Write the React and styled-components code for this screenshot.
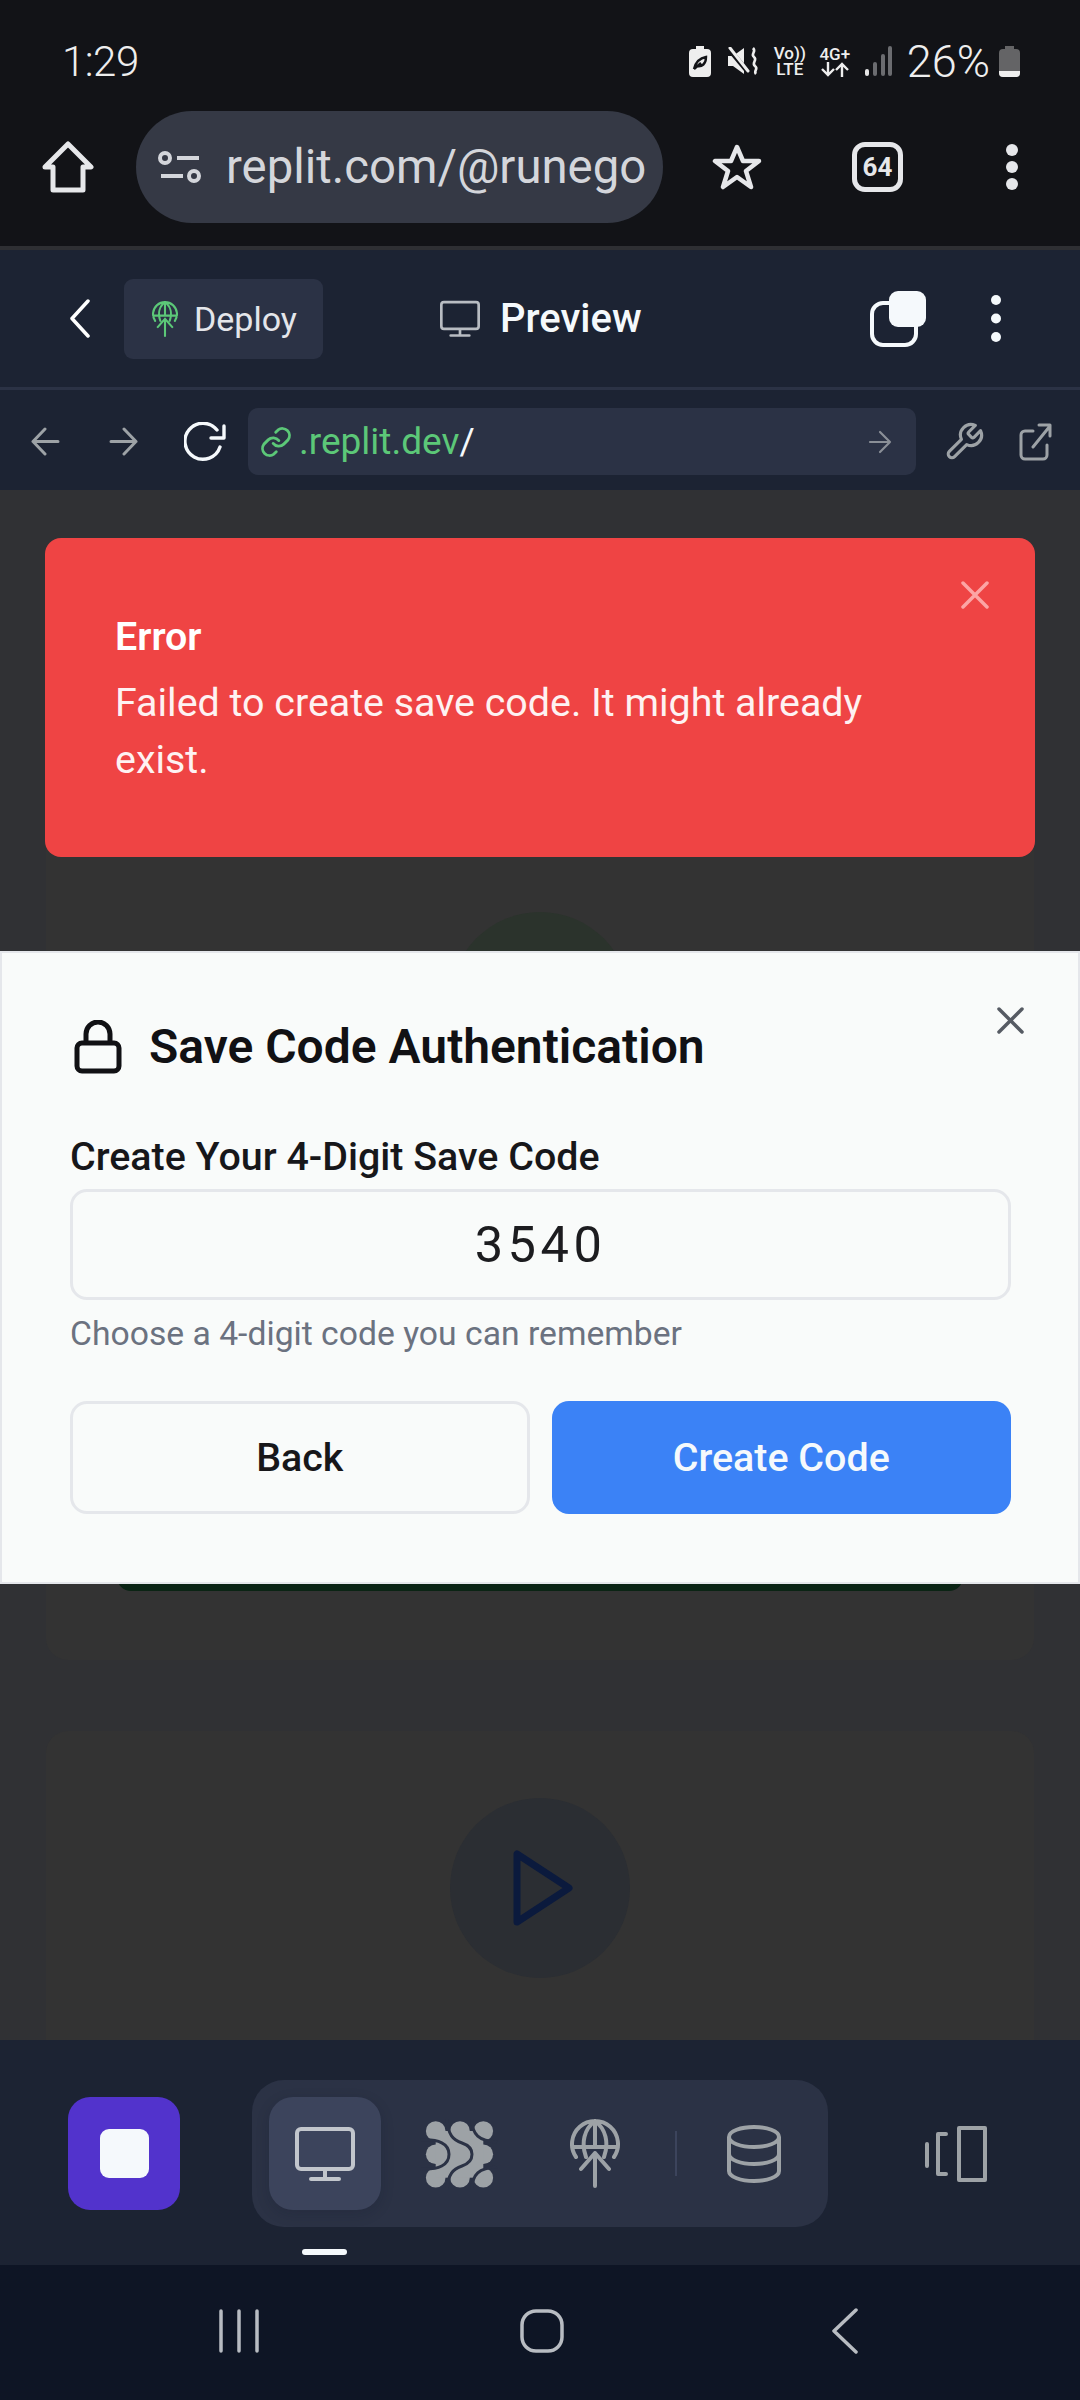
import React from 'react'
import styled, { createGlobalStyle } from 'styled-components'

const GlobalStyle = createGlobalStyle`
  html, body { margin: 0; padding: 0; background: #0e1525; }
  * { box-sizing: border-box; }
  body { font-family: Roboto, "Liberation Sans", sans-serif; }
`

const Screen = styled.div`
  width: 1080px;
  height: 2400px;
  display: flex;
  flex-direction: column;
  overflow: hidden;
`

const Icon = styled.span`
  display: flex;
  flex: none;
  margin-left: ${(p) => p.$ml || 0}px;
  margin-right: ${(p) => p.$mr || 0}px;
`

const StatusBar = styled.div`
  height: 110px;
  flex: none;
  background: #121317;
  color: #eeeeee;
  display: flex;
  align-items: center;
  padding: 12px 60px 0 62px;
`

const Clock = styled.span`
  font-size: 42px;
  font-weight: 350;
  letter-spacing: -0.5px;
`

const StatusIcons = styled.div`
  margin-left: auto;
  display: flex;
  align-items: center;
`

const TinyStack = styled.div`
  display: flex;
  flex-direction: column;
  align-items: center;
  width: ${(p) => p.$w}px;
  margin-right: ${(p) => p.$mr}px;
  font-size: 17px;
  font-weight: 500;
  line-height: 16px;
  color: #eeeeee;
`

const Percent = styled.span`
  font-size: 45px;
  font-weight: 300;
  margin: 0 9px 0 15px;
  line-height: 1;
`

const ChromeBar = styled.div`
  height: 136px;
  flex: none;
  background: #121317;
  display: flex;
  align-items: center;
  padding: 0 0 22px 42px;
`

const UrlPill = styled.div`
  width: 527px;
  height: 112px;
  margin: 0 49px 0 42px;
  border-radius: 56px;
  background: #353945;
  display: flex;
  align-items: center;
  padding-left: 22px;
`

const UrlText = styled.span`
  width: 419px;
  margin-left: 24px;
  overflow: hidden;
  white-space: nowrap;
  font-size: 47.3px;
  color: #d4d6db;
`

const TabCount = styled.div`
  width: 51px;
  height: 50px;
  margin: 0 103px 0 90px;
  border: 5px solid #e6e7ea;
  border-radius: 13px;
  display: flex;
  align-items: center;
  justify-content: center;
  color: #e6e7ea;
  font-size: 26px;
  font-weight: 700;
`

const Separator = styled.div`
  height: 4px;
  flex: none;
  background: #2e2f33;
`

const ReplitHeader = styled.div`
  height: 140px;
  flex: none;
  background: #1c2333;
  border-bottom: 3px solid #2b3245;
  display: flex;
  align-items: center;
  padding-left: 69px;
`

const DeployButton = styled.div`
  width: 199px;
  height: 80px;
  margin: 0 117px 0 34px;
  border-radius: 9px;
  background: #2b3245;
  display: flex;
  align-items: center;
  gap: 16px;
  padding-left: 28px;
  color: #e4e6ea;
  font-size: 34px;
`

const PreviewTitle = styled.div`
  display: flex;
  align-items: center;
  gap: 20px;
  color: #f5f9fc;
  font-size: 40px;
  font-weight: 500;
  margin-right: 228px;
`

const AddressRow = styled.div`
  height: 100px;
  flex: none;
  background: #1c2333;
  display: flex;
  align-items: center;
  padding: 3px 0 0 31px;
`

const AddressInput = styled.div`
  width: 668px;
  height: 67px;
  margin: 0 27px 0 22px;
  border-radius: 10px;
  background: #2b3245;
  display: flex;
  align-items: center;
  padding: 0 24px 0 11px;
  font-size: 37px;
`

const Domain = styled.span`
  color: #5cc878;
  margin-left: 6px;
`

const Slash = styled.span`
  color: #f5f9fc;
  flex: 1;
`

const Page = styled.div`
  position: relative;
  flex: 1;
  min-height: 0;
  overflow: hidden;
  background: #303134;
  padding: 300px 46px 0;
  display: flex;
  flex-direction: column;
  gap: 71px;
`

const Card = styled.div`
  flex: none;
  height: ${(p) => p.$h}px;
  background: #333333;
  border-radius: 22px;
  display: flex;
  flex-direction: column;
  align-items: center;
  padding-top: ${(p) => p.$top}px;
`

const Circle = styled.div`
  flex: none;
  width: 180px;
  height: 180px;
  border-radius: 50%;
  background: ${(p) => p.$color};
  display: flex;
  align-items: center;
  justify-content: center;
`

const HiddenBar = styled.div`
  width: 846px;
  height: 112px;
  margin-top: 387px;
  border-radius: 14px;
  background: #0a2414;
`

const Toast = styled.div`
  position: absolute;
  top: 48px;
  left: 45px;
  width: 990px;
  height: 319px;
  border-radius: 16px;
  background: #ef4444;
  padding: 71px 130px 0 70px;
  color: #fef2f2;
`

const ToastTitle = styled.div`
  font-size: 39.4px;
  font-weight: 600;
  line-height: 56px;
  color: #ffffff;
`

const ToastBody = styled.div`
  font-size: 39.4px;
  line-height: 56.5px;
  margin-top: 10px;
`

const ToastClose = styled.div`
  position: absolute;
  top: 43px;
  right: 46px;
  line-height: 0;
`

const Modal = styled.div`
  position: absolute;
  top: 461px;
  left: 0;
  width: 1080px;
  height: 633px;
  background: #f9fbfa;
  border: 2px solid #e5e7eb;
  padding: 64px 67px 0 68px;
`

const ModalClose = styled.div`
  position: absolute;
  top: 54px;
  right: 54px;
  line-height: 0;
`

const ModalHeading = styled.div`
  display: flex;
  align-items: center;
  gap: 27px;
  padding-left: 4px;
  font-size: 48px;
  font-weight: 600;
  line-height: 60px;
  color: #111114;
`

const FieldLabel = styled.div`
  margin-top: 51px;
  font-size: 39.4px;
  font-weight: 500;
  line-height: 57px;
  color: #17171a;
`

const CodeField = styled.div`
  margin-top: 4px;
  height: 111px;
  border: 3px solid #e5e7eb;
  border-radius: 17px;
  display: flex;
  align-items: center;
  justify-content: center;
  font-size: 50.6px;
  letter-spacing: 4.5px;
  color: #1c1c1f;
`

const Hint = styled.div`
  margin-top: 9px;
  font-size: 33.7px;
  line-height: 50px;
  color: #6b7280;
`

const Buttons = styled.div`
  margin-top: 42px;
  display: grid;
  grid-template-columns: 1fr 1fr;
  gap: 22px;
`

const ActionButton = styled.div`
  height: 113px;
  border-radius: 17px;
  border: ${(p) => (p.$primary ? '0' : '3px solid #e5e7eb')};
  background: ${(p) => (p.$primary ? '#3b82f6' : 'transparent')};
  color: ${(p) => (p.$primary ? '#f5f9fc' : '#17171a')};
  display: flex;
  align-items: center;
  justify-content: center;
  font-size: 39.4px;
  font-weight: 500;
`

const Footer = styled.div`
  height: 225px;
  flex: none;
  background: #1c2333;
  display: flex;
  align-items: flex-start;
  padding: 40px 0 0 68px;
`

const StopButton = styled.div`
  width: 112px;
  height: 113px;
  margin: 17px 72px 0 0;
  border-radius: 22px;
  background: #5233cc;
  display: flex;
  align-items: center;
  justify-content: center;
`

const StopSquare = styled.div`
  width: 49px;
  height: 49px;
  border-radius: 9px;
  background: #f5f9fc;
`

const TabGroup = styled.div`
  position: relative;
  width: 576px;
  height: 147px;
  border-radius: 32px;
  background: #2b3245;
  display: flex;
  align-items: center;
  padding-left: 17px;
`

const TabSlot = styled.div`
  flex: none;
  width: ${(p) => p.$w}px;
  height: 113px;
  border-radius: 24px;
  background: ${(p) => (p.$active ? '#3c445c' : 'transparent')};
  box-shadow: ${(p) => (p.$active ? '0 4px 14px rgba(14, 21, 37, 0.16)' : 'none')};
  display: flex;
  align-items: center;
  justify-content: center;
`

const TabDivider = styled.div`
  flex: none;
  width: 2px;
  height: 45px;
  background: #3c445c;
  margin: 0 24px;
`

const ActiveMark = styled.div`
  position: absolute;
  left: 50px;
  top: 169px;
  width: 45px;
  height: 6px;
  border-radius: 3px;
  background: #f5f9fc;
`

const DeviceIcon = styled.div`
  margin: 46px 0 0 97px;
  line-height: 0;
`

const NavBar = styled.div`
  height: 135px;
  flex: none;
  background: #0e1525;
  display: flex;
  align-items: center;
  padding: 0 0 4px 219px;
`

const Line = ({ d, w, h, box, color = '#fff', sw = 3 }) => (
  <svg width={w} height={h} viewBox={box} fill="none" stroke={color} strokeWidth={sw} strokeLinecap="round" strokeLinejoin="round">
    <path d={d} />
  </svg>
)

const MONITOR = 'M6 3h48a4 4 0 0 1 4 4v32a4 4 0 0 1-4 4H6a4 4 0 0 1-4-4V7a4 4 0 0 1 4-4ZM30 43v10M16 53h28'
const GLOBE = 'M5 36A23 23 0 1 1 43 36M24 0C13 8 10 22 15 36M24 0C35 8 38 22 33 36M1 26H47M24 0V26M10 48L24 32L38 48M24 32V65'
const DATABASE = 'M27 3c13 0 25 4 25 10s-12 10-25 10S2 19 2 13 14 3 27 3ZM2 13v34c0 6 12 10 25 10s25-4 25-10V13M2 30c0 6 12 10 25 10s25-4 25-10'

const ReplitBlob = () => (
  <svg width="90" height="90" viewBox="0 -2 90 90">
    <g fill="#9da2a6">
      <circle cx="20.7" cy="20" r="9.8" />
      <circle cx="45" cy="20" r="9.8" />
      <circle cx="68.3" cy="20" r="9.8" />
      <circle cx="20.7" cy="43.3" r="9.8" />
      <circle cx="68.3" cy="43.3" r="9.8" />
      <circle cx="20.7" cy="66.7" r="9.8" />
      <circle cx="45" cy="66.7" r="9.8" />
      <circle cx="68.3" cy="66.7" r="9.8" />
      <rect x="20.7" y="20" width="47.6" height="46.7" />
    </g>
    <g fill="none" stroke="#2b3245" strokeWidth="3">
      <path d="M6 29C24 28 34 33 34 43.3C34 54 24 59 6 58" />
      <path d="M32 8C33 24 38 29 47 32C53 34 57 38 57 43.3C57 49 53 53 47 55C38 58 33 63 32 79" />
      <path d="M57 8C57 24 64 30 82 31" />
      <path d="M57 79C57 63 64 57 82 56" />
    </g>
  </svg>
)

export default function App() {
  return (
    <Screen>
      <GlobalStyle />
      <StatusBar>
        <Clock>1:29</Clock>
        <StatusIcons>
          <Icon $mr={17}>
            <svg width="22" height="31" viewBox="0 0 22 31">
              <path d="M7 0h8v3h3a4 4 0 0 1 4 4v20a4 4 0 0 1-4 4H4a4 4 0 0 1-4-4V7a4 4 0 0 1 4-4h3Z" fill="#eee" />
              <path d="M5 23C7 15 11 12 17 11C17 18 13 21 8 20M5 23l7-6" fill="none" stroke="#121317" strokeWidth="2.4" />
            </svg>
          </Icon>
          <Icon $mr={15}>
            <svg width="31" height="28" viewBox="0 0 31 28">
              <path d="M0 9h5L16 1v26L5 19H0Z" fill="#eee" />
              <path d="M1 2l19 23" stroke="#121317" strokeWidth="5" />
              <path d="M2 1l18 23" stroke="#eee" strokeWidth="3" strokeLinecap="round" />
              <path d="M25 1c4 4-3 6 1 9s-3 6 1 9-2 5 1 8" fill="none" stroke="#eee" strokeWidth="2.6" />
            </svg>
          </Icon>
          <TinyStack $w={32} $mr={12}><span>Vo))</span><span>LTE</span></TinyStack>
          <TinyStack $w={34} $mr={13}>
            <span>4G+</span>
            <svg width="30" height="15" viewBox="0 0 30 15" fill="none" stroke="#eee" strokeWidth="2.4">
              <path d="M8 0V13M2 7L8 13L14 7M22 15V2M16 8L22 2L28 8" />
            </svg>
          </TinyStack>
          <svg width="27" height="30" viewBox="0 0 27 30" fill="#6b6c70">
            <rect x="0" y="23" width="4" height="7" rx="2" fill="#e6e6e6" />
            <rect x="8" y="16" width="4" height="14" rx="2" />
            <rect x="16" y="8" width="4" height="22" rx="2" />
            <rect x="23" y="0" width="4" height="30" rx="2" />
          </svg>
          <Percent>26%</Percent>
          <svg width="21" height="31" viewBox="0 0 21 31">
            <path d="M6 0h9v3h2a4 4 0 0 1 4 4v20a4 4 0 0 1-4 4H4a4 4 0 0 1-4-4V7a4 4 0 0 1 4-4h2Z" fill="#646466" />
            <path d="M0 25h21v2a4 4 0 0 1-4 4H4a4 4 0 0 1-4-4Z" fill="#eee" />
          </svg>
        </StatusIcons>
      </StatusBar>

      <ChromeBar>
        <Line w={52} h={52} box="0 0 52 52" color="#e6e7ea" sw={5} d="M26 3L49 26H41V49H11V26H3Z" />
        <UrlPill>
          <svg width="44" height="34" viewBox="0 0 44 34" fill="none" stroke="#d4d6db" strokeWidth="4">
            <circle cx="7" cy="8" r="5" />
            <path d="M19 8h22M3 26h22" />
            <circle cx="36" cy="26" r="5" />
          </svg>
          <UrlText>replit.com/@runego</UrlText>
        </UrlPill>
        <Line w={50} h={46} box="0 0 50 46" color="#e6e7ea" sw={4.5} d="M25 3L31 17H47L34 27L39 43L25 33L11 43L16 27L3 17H19Z" />
        <TabCount>64</TabCount>
        <svg width="12" height="46" viewBox="0 0 12 46" fill="#e6e7ea">
          <circle cx="6" cy="6" r="6" /><circle cx="6" cy="23" r="6" /><circle cx="6" cy="40" r="6" />
        </svg>
      </ChromeBar>
      <Separator />

      <ReplitHeader>
        <Line w={21} h={39} box="0 0 21 39" sw={3.5} d="M19 2L3 19.5L19 37" />
        <DeployButton>
          <svg width="26" height="36" viewBox="-1 -2 50 69" fill="none" stroke="#5cc878" strokeWidth="4" strokeLinecap="round">
            <path d={GLOBE} />
          </svg>
          Deploy
        </DeployButton>
        <PreviewTitle>
          <Line w={40} h={37} box="0 0 60 55" color="#b8bcc2" sw={4} d={MONITOR} />
          Preview
        </PreviewTitle>
        <Icon $mr={65}>
          <svg width="56" height="56" viewBox="0 0 56 56">
            <rect x="2" y="12" width="44" height="42" rx="11" fill="none" stroke="#f5f9fc" strokeWidth="4" />
            <rect x="19" y="0" width="37" height="36" rx="9" fill="#f5f9fc" />
          </svg>
        </Icon>
        <svg width="10" height="47" viewBox="0 0 10 47" fill="#f5f9fc">
          <circle cx="5" cy="5" r="5" /><circle cx="5" cy="23.5" r="5" /><circle cx="5" cy="42" r="5" />
        </svg>
      </ReplitHeader>

      <AddressRow>
        <Line w={29} h={31} box="0 0 29 31" color="#9da2a6" d="M14 3L2 15.5L14 28M2 15.5H27" />
        <Icon $ml={49} $mr={46}>
          <Line w={29} h={31} box="0 0 29 31" color="#9da2a6" d="M15 3L27 15.5L15 28M27 15.5H2" />
        </Icon>
        <Line w={42} h={40} box="0 0 42 40" color="#f5f9fc" sw={3.4} d="M33 8A18 18 0 1 0 36 25M40 4V16H27" />
        <AddressInput>
          <Line w={34} h={34} box="0 0 24 24" color="#5cc878" sw={2} d="M10 13a5 5 0 0 0 7.5.5l3-3a5 5 0 0 0-7-7l-1.7 1.7M14 11a5 5 0 0 0-7.5-.5l-3 3a5 5 0 0 0 7 7l1.7-1.7" />
          <Domain>.replit.dev</Domain>
          <Slash>/</Slash>
          <Line w={24} h={24} box="0 0 24 24" color="#8a8f97" sw={2.2} d="M12 2L22 12L12 22M22 12H2" />
        </AddressInput>
        <Icon $mr={34}>
          <Line w={42} h={42} box="0 0 24 24" color="#9da2a6" sw={1.8} d="M14.7 6.3a1 1 0 0 0 0 1.4l1.6 1.6a1 1 0 0 0 1.4 0l3.77-3.77a6 6 0 0 1-7.94 7.94l-6.91 6.91a2.12 2.12 0 0 1-3-3l6.91-6.91a6 6 0 0 1 7.94-7.94l-3.76 3.76Z" />
        </Icon>
        <Line w={33} h={38} box="0 0 33 38" color="#9da2a6" d="M14 8H6a4 4 0 0 0-4 4v20a4 4 0 0 0 4 4h18a4 4 0 0 0 4-4V22M14 24L31 3M20 2h11v11" />
      </AddressRow>

      <Page>
        <Card $h={870} $top={122}>
          <Circle $color="#2b332c" />
          <HiddenBar />
        </Card>
        <Card $h={400} $top={67}>
          <Circle $color="#2b2e33">
            <Icon $ml={6}>
              <Line w={60} h={76} box="0 0 60 76" color="#0b1a3d" sw={7} d="M4 4V72L56 38Z" />
            </Icon>
          </Circle>
        </Card>

        <Toast>
          <ToastClose>
            <Line w={28} h={28} box="0 0 28 28" color="#fca5a5" sw={3.5} d="M2 2L26 26M26 2L2 26" />
          </ToastClose>
          <ToastTitle>Error</ToastTitle>
          <ToastBody>Failed to create save code. It might already exist.</ToastBody>
        </Toast>

        <Modal>
          <ModalClose>
            <Line w={27} h={27} box="0 0 27 27" color="#565b63" sw={3.5} d="M2 2L25 25M25 2L2 25" />
          </ModalClose>
          <ModalHeading>
            <Line w={48} h={54} box="0 0 48 54" color="#111114" sw={5} d="M8 23h32a5 5 0 0 1 5 5v18a5 5 0 0 1-5 5H8a5 5 0 0 1-5-5V28a5 5 0 0 1 5-5ZM12 23V14a12 12 0 0 1 24 0v9" />
            Save Code Authentication
          </ModalHeading>
          <FieldLabel>Create Your 4-Digit Save Code</FieldLabel>
          <CodeField>3540</CodeField>
          <Hint>Choose a 4-digit code you can remember</Hint>
          <Buttons>
            <ActionButton>Back</ActionButton>
            <ActionButton $primary>Create Code</ActionButton>
          </Buttons>
        </Modal>
      </Page>

      <Footer>
        <StopButton><StopSquare /></StopButton>
        <TabGroup>
          <TabSlot $w={112} $active>
            <Line w={60} h={55} box="0 0 60 55" color="#c2c6cc" sw={4} d={MONITOR} />
          </TabSlot>
          <TabSlot $w={157}><ReplitBlob /></TabSlot>
          <TabSlot $w={113}>
            <Line w={50} h={69} box="-1 -2 50 69" color="#9da2a6" sw={4} d={GLOBE} />
          </TabSlot>
          <TabDivider />
          <TabSlot $w={106}>
            <Line w={54} h={60} box="0 0 54 60" color="#9da2a6" sw={4} d={DATABASE} />
          </TabSlot>
          <ActiveMark />
        </TabGroup>
        <DeviceIcon>
          <Line w={62} h={56} box="0 0 62 56" color="#9da2a6" sw={4} d="M2 18V40M21 8H13V48H21M34 2H60V54H34Z" />
        </DeviceIcon>
      </Footer>

      <NavBar>
        <Line w={40} h={44} box="0 0 40 44" color="#b8bcc2" sw={3.5} d="M2 2V42M20 2V42M38 2V42" />
        <Icon $ml={261} $mr={268}>
          <Line w={44} h={44} box="0 0 44 44" color="#b8bcc2" sw={3.5} d="M16 2H28A14 14 0 0 1 42 16V28A14 14 0 0 1 28 42H16A14 14 0 0 1 2 28V16A14 14 0 0 1 16 2Z" />
        </Icon>
        <Line w={26} h={46} box="0 0 26 46" color="#b8bcc2" sw={3.5} d="M24 2L2 23L24 44" />
      </NavBar>
    </Screen>
  )
}
